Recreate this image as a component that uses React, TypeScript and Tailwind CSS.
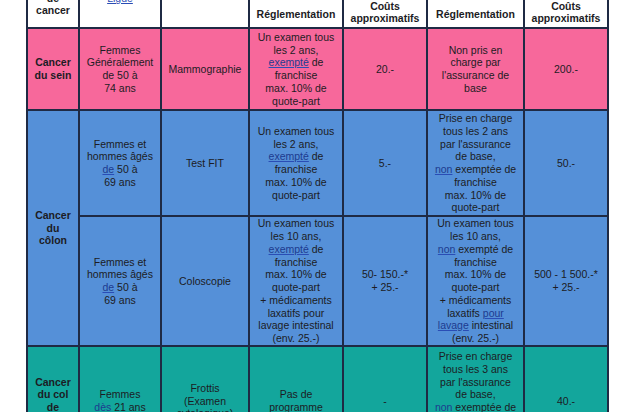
import type { ReactNode } from "react";

const PINK = "bg-[#f7689b]";
const BLUE = "bg-[#5590d8]";
const TEAL = "bg-[#13a69c]";

function U({ children }: { children: ReactNode }) {
  return <span className="text-[#1d3b8f] underline decoration-[#2a4db5]">{children}</span>;
}

function Td({ children, bold = false, rowSpan }: { children?: ReactNode; bold?: boolean; rowSpan?: number }) {
  return (
    <td
      rowSpan={rowSpan}
      className={`border-2 border-[#1f2a44] px-1 text-center align-middle whitespace-nowrap ${bold ? "font-bold" : ""}`}
    >
      {children}
    </td>
  );
}

// header is cropped at the top in the picture, only the bottom lines show
function Th({ children, pb }: { children?: ReactNode; pb: string }) {
  return (
    <th className="border-x-2 border-b-2 border-[#1f2a44] p-0 align-bottom font-bold">
      <div className={`flex h-[27px] flex-col items-center justify-end overflow-hidden ${pb}`}>{children}</div>
    </th>
  );
}

export default function App() {
  return (
    <div className="h-[412px] w-[630px] overflow-hidden bg-white [font-family:'Liberation_Sans',Arial,sans-serif] text-[10.5px] leading-[12.75px] text-[#1c1c24]">
      <table className="ml-[26px] w-[581px] table-fixed border-collapse">
        <colgroup>
          <col className="w-[52px]" />
          <col className="w-[82px]" />
          <col className="w-[88px]" />
          <col className="w-[94px]" />
          <col className="w-[84px]" />
          <col className="w-[97px]" />
          <col className="w-[84px]" />
        </colgroup>
        <thead>
          <tr className="h-[28px] bg-white">
            <Th pb="pb-[10px]">
              <span>Type</span>
              <span>de</span>
              <span>cancer</span>
            </Th>
            <Th pb="pb-[22px]">
              <span className="font-normal text-[#2a4db5] underline">Ligue</span>
            </Th>
            <Th pb="pb-0" />
            <Th pb="pb-[6px]">
              <span>Réglementation</span>
            </Th>
            <Th pb="pb-[2px]">
              <span>Coûts</span>
              <span>approximatifs</span>
            </Th>
            <Th pb="pb-[6px]">
              <span>Réglementation</span>
            </Th>
            <Th pb="pb-[2px]">
              <span>Coûts</span>
              <span>approximatifs</span>
            </Th>
          </tr>
        </thead>
        <tbody>
          <tr className={`h-[82px] ${PINK}`}>
            <Td bold>
              Cancer
              <br />
              du sein
            </Td>
            <Td>
              Femmes
              <br />
              Généralement
              <br />
              de 50 à
              <br />
              74 ans
            </Td>
            <Td>Mammographie</Td>
            <Td>
              Un examen tous
              <br />
              les 2 ans,
              <br />
              <U>exempté</U> de
              <br />
              franchise
              <br />
              max. 10% de
              <br />
              quote-part
            </Td>
            <Td>20.-</Td>
            <Td>
              Non pris en
              <br />
              charge par
              <br />
              l'assurance de
              <br />
              base
            </Td>
            <Td>200.-</Td>
          </tr>

          <tr className={`h-[106px] ${BLUE}`}>
            <Td bold rowSpan={2}>
              Cancer
              <br />
              du
              <br />
              côlon
            </Td>
            <Td>
              Femmes et
              <br />
              hommes âgés
              <br />
              <U>de</U> 50 à
              <br />
              69 ans
            </Td>
            <Td>Test FIT</Td>
            <Td>
              Un examen tous
              <br />
              les 2 ans,
              <br />
              <U>exempté</U> de
              <br />
              franchise
              <br />
              max. 10% de
              <br />
              quote-part
            </Td>
            <Td>5.-</Td>
            <Td>
              Prise en charge
              <br />
              tous les 2 ans
              <br />
              par l'assurance
              <br />
              de base,
              <br />
              <U>non</U> exemptée de
              <br />
              franchise
              <br />
              max. 10% de
              <br />
              quote-part
            </Td>
            <Td>50.-</Td>
          </tr>

          <tr className={`h-[130px] ${BLUE}`}>
            <Td>
              Femmes et
              <br />
              hommes âgés
              <br />
              <U>de</U> 50 à
              <br />
              69 ans
            </Td>
            <Td>Coloscopie</Td>
            <Td>
              Un examen tous
              <br />
              les 10 ans,
              <br />
              <U>exempté</U> de
              <br />
              franchise
              <br />
              max. 10% de
              <br />
              quote-part
              <br />
              + médicaments
              <br />
              laxatifs pour
              <br />
              lavage intestinal
              <br />
              (env. 25.-)
            </Td>
            <Td>
              50- 150.-*
              <br />
              + 25.-
            </Td>
            <Td>
              Un examen tous
              <br />
              les 10 ans,
              <br />
              <U>non</U> exempté de
              <br />
              franchise
              <br />
              max. 10% de
              <br />
              quote-part
              <br />
              + médicaments
              <br />
              laxatifs <U>pour</U>
              <br />
              <U>lavage</U> intestinal
              <br />
              (env. 25.-)
            </Td>
            <Td>
              500 - 1 500.-*
              <br />
              + 25.-
            </Td>
          </tr>

          <tr className={`h-[110px] ${TEAL}`}>
            <Td bold>
              Cancer
              <br />
              du col
              <br />
              <span className="underline">de</span>
              <br />
              l'utérus
            </Td>
            <Td>
              Femmes
              <br />
              <U>dès</U> 21 ans
            </Td>
            <Td>
              Frottis
              <br />
              (Examen
              <br />
              cytologique)
            </Td>
            <Td>
              &nbsp;
              <br />
              Pas de
              <br />
              programme
              <br />
              actuellement
            </Td>
            <Td>-</Td>
            <Td>
              Prise en charge
              <br />
              tous les 3 ans
              <br />
              par l'assurance
              <br />
              de base,
              <br />
              <U>non</U> exemptée de
              <br />
              franchise
              <br />
              max. 10% de
              <br />
              quote-part
            </Td>
            <Td>40.-</Td>
          </tr>
        </tbody>
      </table>
    </div>
  );
}
